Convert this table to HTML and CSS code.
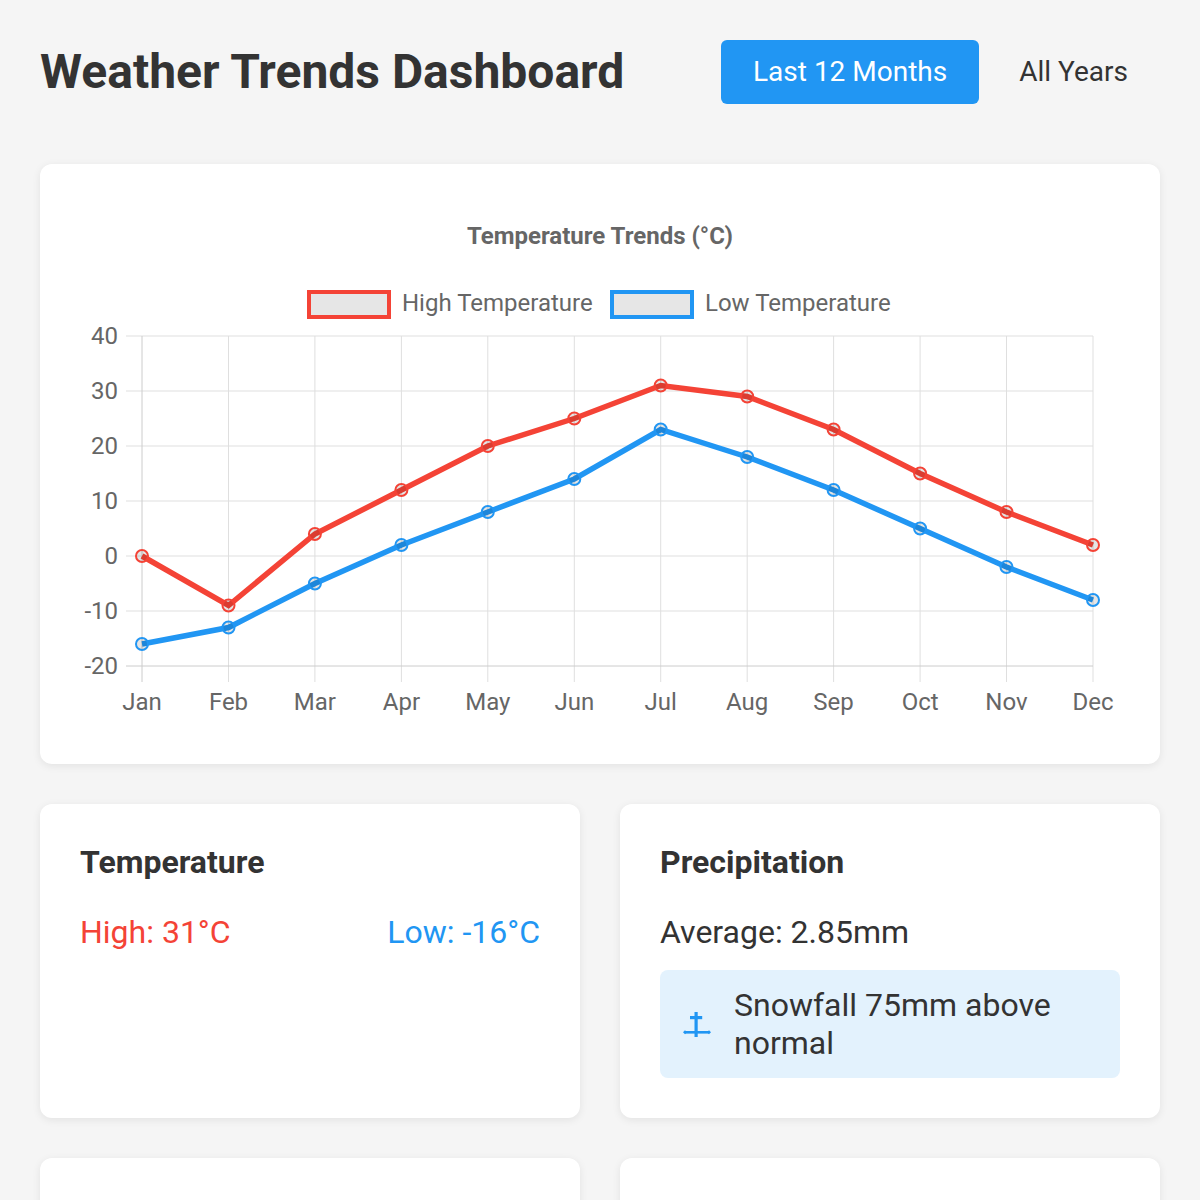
FILE: index.html
```html
<!DOCTYPE html>
<html lang="en">
<head>
<meta charset="utf-8">
<title>Weather Trends Dashboard</title>
<link rel="stylesheet" href="styles.css">
</head>
<body>
<header class="header">
  <h1 class="page-title">Weather Trends Dashboard</h1>
  <div class="toggle">
    <button class="btn active">Last 12 Months</button>
    <button class="btn">All Years</button>
  </div>
</header>

<section class="card chart-card">
  <svg class="chart" width="1120" height="600" viewBox="0 0 1120 600">
    <text class="chart-title" x="560" y="80" text-anchor="middle">Temperature Trends (°C)</text>
    <rect x="269" y="128" width="80" height="25" class="legend-box red"/>
    <text class="legend-text" x="362" y="147">High Temperature</text>
    <rect x="572" y="128" width="80" height="25" class="legend-box blue"/>
    <text class="legend-text" x="665" y="147">Low Temperature</text>

    <g class="grid-lines">
      <line x1="86" y1="172" x2="1053" y2="172"/>
      <line x1="86" y1="227" x2="1053" y2="227"/>
      <line x1="86" y1="282" x2="1053" y2="282"/>
      <line x1="86" y1="337" x2="1053" y2="337"/>
      <line x1="86" y1="392" x2="1053" y2="392"/>
      <line x1="86" y1="447" x2="1053" y2="447"/>
      <line x1="188.5" y1="172" x2="188.5" y2="518"/>
      <line x1="274.9" y1="172" x2="274.9" y2="518"/>
      <line x1="361.4" y1="172" x2="361.4" y2="518"/>
      <line x1="447.8" y1="172" x2="447.8" y2="518"/>
      <line x1="534.3" y1="172" x2="534.3" y2="518"/>
      <line x1="620.7" y1="172" x2="620.7" y2="518"/>
      <line x1="707.2" y1="172" x2="707.2" y2="518"/>
      <line x1="793.6" y1="172" x2="793.6" y2="518"/>
      <line x1="880.1" y1="172" x2="880.1" y2="518"/>
      <line x1="966.5" y1="172" x2="966.5" y2="518"/>
      <line x1="1053" y1="172" x2="1053" y2="518"/>
    </g>
    <g class="axis-lines">
      <line x1="102" y1="172" x2="102" y2="518"/>
      <line x1="86" y1="502" x2="1053" y2="502"/>
    </g>

    <g class="tick-labels y-labels">
      <text x="78" y="180">40</text>
      <text x="78" y="235">30</text>
      <text x="78" y="290">20</text>
      <text x="78" y="345">10</text>
      <text x="78" y="400">0</text>
      <text x="78" y="455">-10</text>
      <text x="78" y="510">-20</text>
    </g>
    <g class="tick-labels x-labels">
      <text x="102" y="546">Jan</text>
      <text x="188.5" y="546">Feb</text>
      <text x="274.9" y="546">Mar</text>
      <text x="361.4" y="546">Apr</text>
      <text x="447.8" y="546">May</text>
      <text x="534.3" y="546">Jun</text>
      <text x="620.7" y="546">Jul</text>
      <text x="707.2" y="546">Aug</text>
      <text x="793.6" y="546">Sep</text>
      <text x="880.1" y="546">Oct</text>
      <text x="966.5" y="546">Nov</text>
      <text x="1053" y="546">Dec</text>
    </g>

    <polyline class="series blue" points="102,480 188.5,463.5 274.9,419.5 361.4,381 447.8,348 534.3,315 620.7,265.5 707.2,293 793.6,326 880.1,364.5 966.5,403 1053,436"/>
    <g class="points blue">
      <circle cx="102" cy="480" r="6"/><circle cx="188.5" cy="463.5" r="6"/><circle cx="274.9" cy="419.5" r="6"/>
      <circle cx="361.4" cy="381" r="6"/><circle cx="447.8" cy="348" r="6"/><circle cx="534.3" cy="315" r="6"/>
      <circle cx="620.7" cy="265.5" r="6"/><circle cx="707.2" cy="293" r="6"/><circle cx="793.6" cy="326" r="6"/>
      <circle cx="880.1" cy="364.5" r="6"/><circle cx="966.5" cy="403" r="6"/><circle cx="1053" cy="436" r="6"/>
    </g>
    <polyline class="series red" points="102,392 188.5,441.5 274.9,370 361.4,326 447.8,282 534.3,254.5 620.7,221.5 707.2,232.5 793.6,265.5 880.1,309.5 966.5,348 1053,381"/>
    <g class="points red">
      <circle cx="102" cy="392" r="6"/><circle cx="188.5" cy="441.5" r="6"/><circle cx="274.9" cy="370" r="6"/>
      <circle cx="361.4" cy="326" r="6"/><circle cx="447.8" cy="282" r="6"/><circle cx="534.3" cy="254.5" r="6"/>
      <circle cx="620.7" cy="221.5" r="6"/><circle cx="707.2" cy="232.5" r="6"/><circle cx="793.6" cy="265.5" r="6"/>
      <circle cx="880.1" cy="309.5" r="6"/><circle cx="966.5" cy="348" r="6"/><circle cx="1053" cy="381" r="6"/>
    </g>
  </svg>
</section>

<main class="cards">
  <section class="card stat-card">
    <h3 class="card-title">Temperature</h3>
    <div class="temps">
      <span class="high">High: 31°C</span>
      <span class="low">Low: -16°C</span>
    </div>
  </section>
  <section class="card stat-card">
    <h3 class="card-title">Precipitation</h3>
    <p class="avg">Average: 2.85mm</p>
    <div class="alert">
      <svg class="alert-icon" width="28" height="28" viewBox="0 0 28 28">
        <rect x="11.5" y="2" width="3.2" height="25" fill="#2196F3"/>
        <rect x="7" y="6" width="12.2" height="3.2" fill="#2196F3"/>
        <rect x="2" y="21" width="24" height="2.6" fill="#2196F3"/>
        <path d="M0 22.3 L2 20.3 L4 22.3 L2 24.3 Z" fill="#2196F3"/>
        <path d="M24 22.3 L26 20.3 L28 22.3 L26 24.3 Z" fill="#2196F3"/>
      </svg>
      <span class="alert-text">Snowfall 75mm above normal</span>
    </div>
  </section>
  <section class="card stat-card tall"></section>
  <section class="card stat-card tall"></section>
</main>
</body>
</html>
```

FILE: styles.css
```css
* { box-sizing: border-box; }

body {
  margin: 0;
  padding: 40px;
  background: #f5f5f5;
  font-family: Roboto, "Liberation Sans", Arial, sans-serif;
  color: #333;
}

.header {
  display: flex;
  justify-content: space-between;
  align-items: center;
  margin-bottom: 60px;
}

.page-title {
  margin: 0;
  font-size: 48px;
  font-weight: 700;
  line-height: 56px;
  color: #333;
}

.toggle {
  display: flex;
  gap: 8px;
}

.btn {
  font-family: Roboto, "Liberation Sans", Arial, sans-serif;
  font-size: 28px;
  line-height: 32px;
  padding: 16px 32px;
  border: 0;
  border-radius: 6px;
  background: transparent;
  color: #333;
}

.btn.active {
  background: #2196F3;
  color: #fff;
}

.card {
  background: #fff;
  border-radius: 12px;
  box-shadow: 0 2px 8px rgba(0, 0, 0, 0.08);
}

.chart-card {
  height: 600px;
  margin-bottom: 40px;
  overflow: hidden;
}

.chart {
  display: block;
  font-family: Roboto, "Liberation Sans", Arial, sans-serif;
}

.chart-title {
  font-size: 24px;
  font-weight: 700;
  fill: #666;
}

.legend-box {
  fill: #e6e6e6;
  stroke-width: 4;
}
.legend-box.red { stroke: #f44336; }
.legend-box.blue { stroke: #2196F3; }

.legend-text {
  font-size: 24px;
  fill: #666;
}

.grid-lines line {
  stroke: #dfdfdf;
  stroke-width: 1;
}
.axis-lines line {
  stroke: #cccccc;
  stroke-width: 1;
}

.tick-labels text {
  font-size: 24px;
  fill: #666;
}
.y-labels text { text-anchor: end; }
.x-labels text { text-anchor: middle; }

.series {
  fill: none;
  stroke-width: 5.5;
}
.series.red { stroke: #f44336; }
.series.blue { stroke: #2196F3; }

.points circle {
  fill: rgba(0, 0, 0, 0.1);
  stroke-width: 2;
}
.points.red circle { stroke: #f44336; }
.points.blue circle { stroke: #2196F3; }

.cards {
  display: grid;
  grid-template-columns: 1fr 1fr;
  gap: 40px;
}

.stat-card {
  padding: 40px;
}

.stat-card.tall {
  min-height: 300px;
}

.card-title {
  margin: 0 0 33px;
  font-size: 32px;
  line-height: 36px;
  font-weight: 700;
  color: #333;
}

.temps {
  display: flex;
  justify-content: space-between;
  font-size: 32px;
  line-height: 38px;
}

.high { color: #f44336; }
.low { color: #2196F3; }

.avg {
  margin: 0 0 19px;
  font-size: 32px;
  line-height: 38px;
  color: #333;
}

.alert {
  display: flex;
  align-items: center;
  gap: 23px;
  padding: 16px 24px 16px 23px;
  background: #e3f2fd;
  border-radius: 8px;
}

.alert-icon {
  flex: none;
  display: block;
}

.alert-text {
  font-size: 32px;
  line-height: 38px;
  color: #333;
}
```
